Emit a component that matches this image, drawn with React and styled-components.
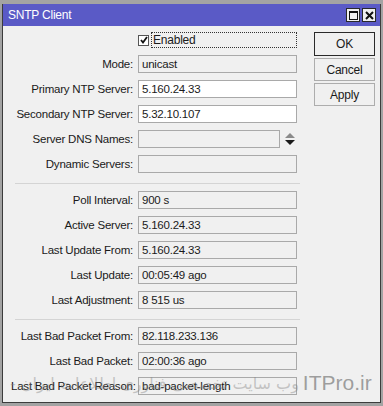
import styled, { createGlobalStyle } from "styled-components";

const GlobalStyle = createGlobalStyle`
  html, body {
    margin: 0;
    padding: 0;
    background: #a3a3a3;
  }
  body {
    font-family: "Liberation Sans", Arial, sans-serif;
    font-size: 11.5px;
    letter-spacing: -0.22px;
    color: #1a1a1a;
  }
`;

const Screen = styled.div`
  width: 383px;
  height: 406px;
  padding: 4px 2px 0 2px;
  box-sizing: border-box;
  position: relative;
  overflow: hidden;
`;

const Window = styled.div`
  width: 379px;
  height: 399px;
  display: flex;
  flex-direction: column;
  box-sizing: border-box;
  border: 1px solid #3c3c3c;
  border-top: none;
  background: #f0f0f0;
`;

const TitleBar = styled.div`
  height: 22px;
  background: #5a5ac6;
  color: #fff;
  display: flex;
  align-items: center;
  justify-content: space-between;
  padding: 0 4px 0 5px;
  font-size: 12px;
`;

const TitleButtons = styled.div`
  display: flex;
  gap: 2px;
`;

const TitleButton = styled.div`
  width: 12px;
  height: 12px;
  background: #f0f0f0;
  border: 1px solid #2a2a2a;
  display: flex;
  align-items: center;
  justify-content: center;
`;

const Body = styled.div`
  flex: 1;
  display: grid;
  grid-template-columns: 300px 61px;
  column-gap: 11px;
  padding: 6px 0 0 0;
`;

const Form = styled.div`
  display: flex;
  flex-direction: column;
  gap: 7px;
  padding-left: 8px;
`;

const Row = styled.div`
  display: grid;
  grid-template-columns: 122px 159px;
  column-gap: 5px;
  align-items: center;
  height: ${(p) => (p.$short ? "16px" : "18px")};
`;

const Label = styled.span`
  text-align: right;
  white-space: nowrap;
`;

const Field = styled.div`
  box-sizing: border-box;
  height: 18px;
  width: ${(p) => (p.$narrow ? "142px" : "159px")};
  border: 1px solid #a9a9a9;
  background: ${(p) => (p.$editable ? "#fff" : "#f0f0f0")};
  padding: 0 3px;
  line-height: 16px;
  white-space: nowrap;
  overflow: hidden;
`;

const FieldWithSpinner = styled.div`
  display: flex;
  align-items: center;
  gap: 5px;
`;

const CheckWrap = styled.div`
  display: flex;
  align-items: center;
  gap: 2px;
`;

const CheckBox = styled.div`
  width: 9px;
  height: 9px;
  border: 1px solid #555;
  background: #fff;
  display: flex;
  align-items: center;
  justify-content: center;
`;

const FocusLabel = styled.span`
  flex: 1;
  border: 1px dotted #333;
  height: 14px;
  line-height: 14px;
  padding-left: 1px;
  font-size: 12px;
`;

const Separator = styled.div`
  height: 1px;
  background: #d4d4d4;
  margin: 3px 0 0 4px;
  width: 285px;
`;

const Buttons = styled.div`
  display: flex;
  flex-direction: column;
  gap: 2px;
`;

const Button = styled.div`
  box-sizing: border-box;
  height: ${(p) => (p.$default ? "24px" : "23px")};
  border: 1px solid ${(p) => (p.$default ? "#2a2a2a" : "#adadad")};
  background: #f0f0f0;
  display: flex;
  align-items: center;
  justify-content: center;
  font-size: 12px;
`;

const Watermark = styled.div`
  position: absolute;
  left: 10px;
  top: 371px;
  display: flex;
  align-items: center;
  gap: 4px;
  color: rgba(130, 130, 130, 0.75);
  pointer-events: none;
  white-space: nowrap;
  letter-spacing: 0;
`;

const WatermarkFa = styled.span`
  font-family: "DejaVu Sans", sans-serif;
  font-size: 16px;
  direction: rtl;
  opacity: 0.55;
`;

const WatermarkBrand = styled.span`
  font-family: "Liberation Sans", Arial, sans-serif;
  font-size: 21px;
`;

const fields1 = [
  { label: "Mode:", value: "unicast" },
  { label: "Primary NTP Server:", value: "5.160.24.33", editable: true },
  { label: "Secondary NTP Server:", value: "5.32.10.107", editable: true },
];

const fields2 = [
  { label: "Poll Interval:", value: "900 s" },
  { label: "Active Server:", value: "5.160.24.33" },
  { label: "Last Update From:", value: "5.160.24.33" },
  { label: "Last Update:", value: "00:05:49 ago" },
  { label: "Last Adjustment:", value: "8 515 us" },
];

const fields3 = [
  { label: "Last Bad Packet From:", value: "82.118.233.136" },
  { label: "Last Bad Packet:", value: "02:00:36 ago" },
  { label: "Last Bad Packet Reason:", value: "bad-packet-length" },
];

const FieldRow = ({ label, value, editable }) => (
  <Row>
    <Label>{label}</Label>
    <Field $editable={editable}>{value}</Field>
  </Row>
);

const App = () => {
  return (
    <>
      <GlobalStyle />
      <Screen>
        <Window>
          <TitleBar>
            <span>SNTP Client</span>
            <TitleButtons>
              <TitleButton>
                <svg width="9" height="9" viewBox="0 0 9 9">
                  <rect x="0.5" y="0.5" width="8" height="8" fill="none" stroke="#111" />
                  <line x1="0" y1="1.5" x2="9" y2="1.5" stroke="#111" />
                </svg>
              </TitleButton>
              <TitleButton>
                <svg width="9" height="9" viewBox="0 0 9 9">
                  <path d="M1 1 L8 8 M8 1 L1 8" stroke="#111" strokeWidth="2" />
                </svg>
              </TitleButton>
            </TitleButtons>
          </TitleBar>
          <Body>
            <Form>
              <Row $short>
                <span />
                <CheckWrap>
                  <CheckBox>
                    <svg width="8" height="8" viewBox="0 0 8 8">
                      <path d="M1 4 L3 6.5 L7 1" fill="none" stroke="#111" strokeWidth="1.8" />
                    </svg>
                  </CheckBox>
                  <FocusLabel>Enabled</FocusLabel>
                </CheckWrap>
              </Row>
              {fields1.map((f) => (
                <FieldRow key={f.label} {...f} />
              ))}
              <Row>
                <Label>Server DNS Names:</Label>
                <FieldWithSpinner>
                  <Field $narrow />
                  <svg width="10" height="12" viewBox="0 0 10 12">
                    <path d="M5 0 L10 5 L0 5 Z" fill="#8a8a8a" />
                    <path d="M0 7 L10 7 L5 12 Z" fill="#1a1a1a" />
                  </svg>
                </FieldWithSpinner>
              </Row>
              <Row>
                <Label>Dynamic Servers:</Label>
                <Field />
              </Row>
              <Separator />
              {fields2.map((f) => (
                <FieldRow key={f.label} {...f} />
              ))}
              <Separator />
              {fields3.map((f) => (
                <FieldRow key={f.label} {...f} />
              ))}
            </Form>
            <Buttons>
              <Button $default>OK</Button>
              <Button>Cancel</Button>
              <Button>Apply</Button>
            </Buttons>
          </Body>
        </Window>
        <Watermark>
          <WatermarkFa>وب سایت تخصصی فناوری اطلاعات ایران -</WatermarkFa>
          <WatermarkBrand>ITPro.ir</WatermarkBrand>
        </Watermark>
      </Screen>
    </>
  );
};

export default App;
